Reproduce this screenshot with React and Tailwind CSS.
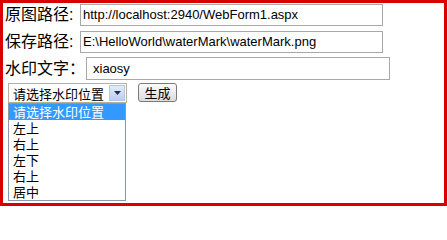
export default function App() {
  const cjk = { fontFamily: '"Noto Sans CJK SC", "Liberation Sans", sans-serif' };
  return (
    <div className="w-[447px] h-[206px] bg-white border-[3px] border-[#d80000] box-border overflow-hidden font-['Liberation_Sans','Noto_Sans_CJK_SC',sans-serif] text-black">
      <div className="flex items-center h-[23px] pl-[2px]">
        <span className="w-[73px] text-[16px] leading-[18px] whitespace-nowrap">原图路径:</span>
        <div className="ml-[2px] w-[303px] h-[22px] border border-[#a8a8a8] flex items-center pl-[2px] text-[13px] leading-none">http://localhost:2940/WebForm1.aspx</div>
      </div>
      <div className="flex items-center h-[23px] mt-[4px] pl-[2px]">
        <span className="w-[73px] text-[16px] leading-[18px] whitespace-nowrap">保存路径:</span>
        <div className="ml-[2px] w-[303px] h-[22px] border border-[#a8a8a8] flex items-center pl-[2px] text-[13px] leading-none">E:\HelloWorld\waterMark\waterMark.png</div>
      </div>
      <div className="flex items-center h-[23px] mt-[4px] pl-[2px]">
        <span className="w-[80px] text-[16px] leading-[18px] whitespace-nowrap">水印文字：</span>
        <div className="ml-[1px] w-[304px] h-[23px] border border-[#a8a8a8] flex items-center pl-[6px] text-[13px] leading-none">xiaosy</div>
      </div>
      <div className="flex items-start mt-[3px] pl-[5px]">
        <div className="flex flex-col">
          <div className="w-[119px] h-[20px] border border-[#b8b09a] flex items-center justify-between pl-[4px] pr-[1px] text-[13px] leading-none" style={cjk}>
            <span>请选择水印位置</span>
            <span className="w-[16px] h-[16px] border border-[#b4c6e8] bg-gradient-to-b from-[#e2ebfb] to-[#bccdf0] flex items-center justify-center">
              <svg width="7" height="4" viewBox="0 0 7 4"><path d="M0 0H7L3.5 4Z" fill="#203050" /></svg>
            </span>
          </div>
          <div className="w-[118px] h-[98px] border border-[#8c9aa8] bg-white text-[13px]" style={cjk}>
            <div className="h-[16px] bg-[#3399ff] text-white pl-[4px] leading-[16px]">请选择水印位置</div>
            <div className="h-[16px] pl-[4px] leading-[16px]">左上</div>
            <div className="h-[16px] pl-[4px] leading-[16px]">右上</div>
            <div className="h-[16px] pl-[4px] leading-[16px]">左下</div>
            <div className="h-[16px] pl-[4px] leading-[16px]">右上</div>
            <div className="h-[16px] pl-[4px] leading-[16px]">居中</div>
          </div>
        </div>
        <button className="ml-[11px] w-[39px] h-[19px] rounded-[3px] border border-[#7a7a7a] bg-gradient-to-b from-[#fbfbfb] to-[#dcdcdc] text-[13px] leading-none flex items-center justify-center" style={cjk}>生成</button>
      </div>
    </div>
  );
}
